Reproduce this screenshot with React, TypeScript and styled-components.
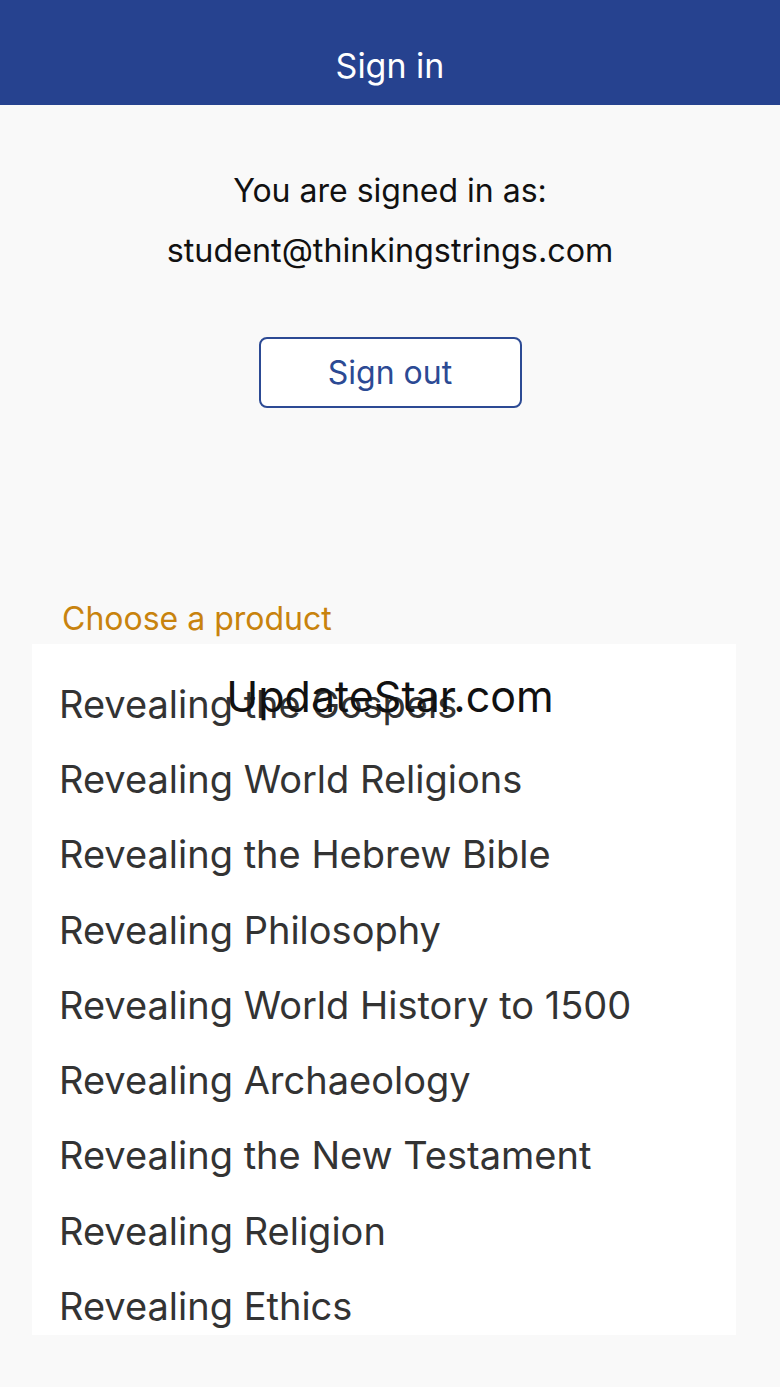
import React from "react";
import styled, { createGlobalStyle } from "styled-components";

const Global = createGlobalStyle`
  html, body { margin: 0; padding: 0; background: #f9f9f9; }
  body { font-family: Inter, "Noto Sans", "Liberation Sans", sans-serif; }
  * { box-sizing: border-box; }
`;

const Page = styled.div`
  position: relative;
  width: 780px;
  height: 1387px;
  background: #f9f9f9;
  overflow: hidden;
  display: flex;
  flex-direction: column;
`;

const Header = styled.header`
  height: 105px;
  flex-shrink: 0;
  background: #26428f;
  color: #fff;
  display: flex;
  align-items: flex-end;
  justify-content: center;
  padding-bottom: 19px;
  font-size: 34px;
`;

const Account = styled.section`
  display: flex;
  flex-direction: column;
  align-items: center;
  padding-top: 56px;
`;

const InfoLine = styled.div<{ $size: number }>`
  font-size: ${(p) => p.$size}px;
  line-height: 60px;
  color: #111;
`;

const SignOut = styled.button`
  margin-top: 56px;
  width: 263px;
  height: 71px;
  border: 2px solid #2c4a94;
  border-radius: 8px;
  background: #fff;
  color: #2c4a94;
  font-family: inherit;
  font-size: 32px;
  padding: 0;
`;

const Products = styled.section`
  margin-top: 193px;
  display: flex;
  flex-direction: column;
`;

const SectionTitle = styled.div`
  padding-left: 62px;
  font-size: 32px;
  line-height: 36px;
  color: #c8830e;
`;

const Card = styled.ul`
  list-style: none;
  margin: 7px 44px 0 32px;
  padding: 22px 0 0 0;
  height: 691px;
  overflow: hidden;
  background: #fff;
`;

const Item = styled.li`
  height: 75.3px;
  display: flex;
  align-items: center;
  padding-left: 27px;
  font-size: 38px;
  color: #333;
`;

const Watermark = styled.div`
  position: absolute;
  top: 670px;
  left: 0;
  right: 0;
  text-align: center;
  font-size: 43px;
  color: #111;
`;

const products = [
  "Revealing the Gospels",
  "Revealing World Religions",
  "Revealing the Hebrew Bible",
  "Revealing Philosophy",
  "Revealing World History to 1500",
  "Revealing Archaeology",
  "Revealing the New Testament",
  "Revealing Religion",
  "Revealing Ethics",
];

export default function App() {
  return (
    <Page>
      <Global />
      <Header>Sign in</Header>
      <Account>
        <InfoLine $size={32}>You are signed in as:</InfoLine>
        <InfoLine $size={32.3}>student@thinkingstrings.com</InfoLine>
        <SignOut>Sign out</SignOut>
      </Account>
      <Products>
        <SectionTitle>Choose a product</SectionTitle>
        <Card>
          {products.map((p) => (
            <Item key={p}>{p}</Item>
          ))}
        </Card>
      </Products>
      <Watermark>UpdateStar.com</Watermark>
    </Page>
  );
}
